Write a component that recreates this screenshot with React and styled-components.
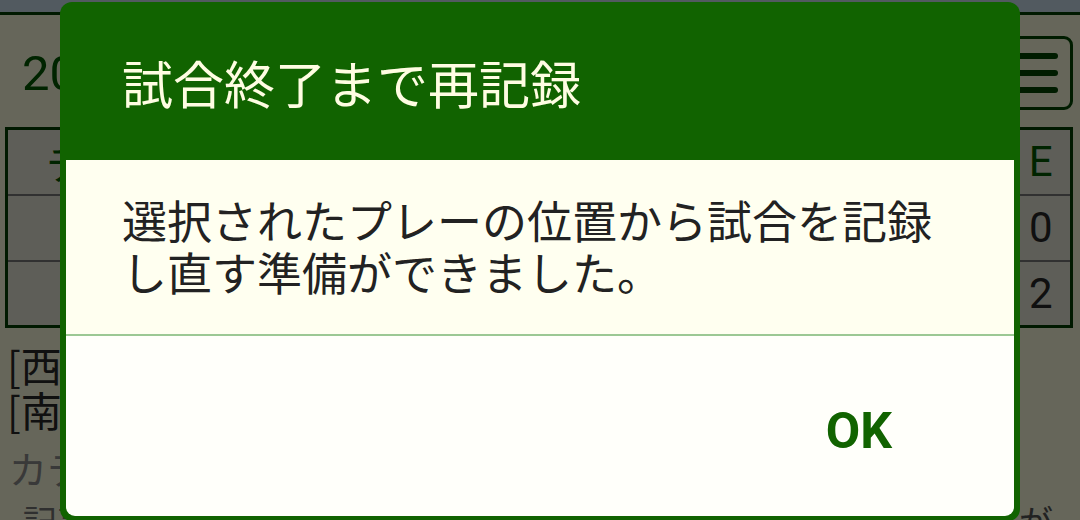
import React from "react";
import styled, { createGlobalStyle } from "styled-components";

const GlobalStyle = createGlobalStyle`
  html, body {
    margin: 0;
    padding: 0;
    width: 1080px;
    height: 520px;
    overflow: hidden;
  }
  * {
    box-sizing: border-box;
  }
`;

const JP = `"Noto Sans CJK JP", "Noto Sans", Roboto, sans-serif`;

export default function App() {
  const innings = ["1", "2", "3", "4", "5", "6", "7", "8", "9", "R", "H", "E"];
  const rows = [
    { team: "西高校", runs: ["0", "0", "1", "0", "0", "2", "0", "0", "0", "3", "6", "0"] },
    { team: "南高校", runs: ["1", "0", "0", "0", "3", "0", "0", "1", "", "5", "9", "2"] },
  ];

  return (
    <>
      <GlobalStyle />
      <Screen>
        <StatusBar />
        <Page>
          <TopRow>
            <GameTitle>2024/06/15 練習試合</GameTitle>
            <MenuButton>
              <MenuLine />
              <MenuLine />
              <MenuLine />
            </MenuButton>
          </TopRow>
          <ScoreTable>
            <thead>
              <tr>
                <TeamHead>チーム</TeamHead>
                {innings.map((i) => (
                  <HeadCell key={i}>{i}</HeadCell>
                ))}
              </tr>
            </thead>
            <tbody>
              {rows.map((r) => (
                <tr key={r.team}>
                  <TeamCell>{r.team}</TeamCell>
                  {r.runs.map((v, idx) => (
                    <Cell key={idx}>{v}</Cell>
                  ))}
                </tr>
              ))}
            </tbody>
          </ScoreTable>
          <GameInfo>
            <TeamLine>[西高校] 先攻 投手:山田</TeamLine>
            <TeamLine>[南高校] 後攻 投手:佐藤</TeamLine>
            <Caption>カテゴリ:高校野球</Caption>
            <NoteLine>
              <span>記事を書くと試合の様子</span>
              <span>が</span>
            </NoteLine>
          </GameInfo>
        </Page>
        <Overlay />
        <Dialog>
          <DialogTitle>試合終了まで再記録</DialogTitle>
          <DialogPanel>
            <Message>
              選択されたプレーの位置から試合を記録
              <br />
              し直す準備ができました。
            </Message>
            <Actions>
              <OkButton type="button">OK</OkButton>
            </Actions>
          </DialogPanel>
        </Dialog>
      </Screen>
    </>
  );
}

const Screen = styled.div`
  position: relative;
  width: 1080px;
  height: 520px;
  overflow: hidden;
  background: #ffffe2;
  font-family: ${JP};
`;

const StatusBar = styled.div`
  height: 15px;
  background: #cde2f0;
  border-bottom: 3px solid #004000;
`;

const Page = styled.div`
  display: flex;
  flex-direction: column;
  padding: 0 7px 0 5px;
`;

const TopRow = styled.div`
  display: flex;
  align-items: center;
  justify-content: space-between;
  height: 112px;
  padding: 0 0 0 17px;
`;

const GameTitle = styled.div`
  font-family: Roboto, ${JP};
  font-size: 49px;
  color: #005a00;
  white-space: nowrap;
  margin-top: -6px;
`;

const MenuButton = styled.div`
  width: 70px;
  height: 74px;
  margin-top: 4px;
  border: 3px solid #004800;
  border-radius: 9px;
  display: flex;
  flex-direction: column;
  justify-content: center;
  align-items: flex-end;
  gap: 11px;
  padding-right: 12px;
`;

const MenuLine = styled.div`
  width: 44px;
  height: 6px;
  border-radius: 3px;
  background: #004800;
`;

const ScoreTable = styled.table`
  width: 100%;
  border-collapse: collapse;
  border: 3px solid #004000;
  background: #ebebdc;
  table-layout: fixed;

  tr + tr td,
  tbody tr:first-child td {
    border-top: 2px solid #7a7a7a;
  }
`;

const TeamHead = styled.th`
  width: 300px;
  height: 66px;
  font-weight: 400;
  font-size: 42px;
  color: #005a00;
  text-align: left;
  padding-left: 38px;
`;

const HeadCell = styled.th`
  font-family: Roboto, ${JP};
  font-weight: 400;
  font-size: 42px;
  color: #005a00;
  text-align: center;
  &:last-child {
    width: 60px;
  }
`;

const TeamCell = styled.td`
  height: 66px;
  font-size: 40px;
  color: #2a2a2a;
  padding-left: 80px;
`;

const Cell = styled.td`
  font-family: Roboto, ${JP};
  font-size: 42px;
  color: #2a2a2a;
  text-align: center;
`;

const GameInfo = styled.div`
  display: flex;
  flex-direction: column;
  margin-top: 14px;
`;

const TeamLine = styled.div`
  font-size: 41px;
  line-height: 45px;
  color: #2a2a2a;
  padding-left: 2px;
  white-space: nowrap;
`;

const Caption = styled.div`
  font-size: 38px;
  line-height: 46px;
  margin-top: 13px;
  color: #8e8e8e;
  padding-left: 4px;
  white-space: nowrap;
`;

const NoteLine = styled.div`
  display: flex;
  justify-content: space-between;
  font-size: 34px;
  line-height: 40px;
  margin-top: 10px;
  padding: 0 20px 0 18px;
  color: #555;
  white-space: nowrap;
  span:first-child {
    color: #777;
  }
`;

const Overlay = styled.div`
  position: absolute;
  inset: 0;
  background: rgba(0, 0, 0, 0.6);
`;

const Dialog = styled.div`
  position: absolute;
  left: 60px;
  top: 2px;
  width: 960px;
  height: 519px;
  background: #116300;
  border-radius: 12px;
  padding: 0 6px 5px;
  display: flex;
  flex-direction: column;
`;

const DialogTitle = styled.h2`
  margin: 0;
  height: 158px;
  padding: 48px 0 0 56px;
  font-family: ${JP};
  font-weight: 400;
  font-size: 51px;
  line-height: 64px;
  color: #fffde2;
`;

const DialogPanel = styled.div`
  flex: 1;
  display: flex;
  flex-direction: column;
  background: #fffffa;
  border-radius: 0 0 9px 9px;
  overflow: hidden;
`;

const Message = styled.p`
  margin: 0;
  padding: 34px 40px 36px 56px;
  background: #fffff0;
  border-bottom: 2px solid #9cc894;
  font-family: ${JP};
  font-size: 45px;
  line-height: 52px;
  color: #222;
`;

const Actions = styled.div`
  flex: 1;
  display: flex;
  justify-content: flex-end;
  align-items: flex-start;
  padding: 65px 106px 0 0;
`;

const OkButton = styled.button`
  border: none;
  background: transparent;
  padding: 0 16px;
  font-family: Roboto, "Liberation Sans", sans-serif;
  font-weight: 700;
  font-size: 50px;
  line-height: 60px;
  color: #116300;
  cursor: pointer;
`;
